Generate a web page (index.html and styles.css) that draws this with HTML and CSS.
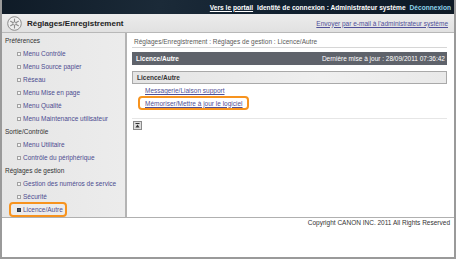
FILE: index.html
```html
<!DOCTYPE html>
<html lang="fr">
<head>
<meta charset="utf-8">
<title>Réglages/Enregistrement</title>
<link rel="stylesheet" href="styles.css">
</head>
<body>
<div class="page">
  <div class="topbar">
    <a class="portal" href="#">Vers le portail</a>
    <span class="ident">Identité de connexion : Administrateur système</span>
    <a class="logout" href="#">Déconnexion</a>
  </div>
  <div class="header">
    <div class="brand">
      <svg class="logo" width="15" height="15" viewBox="0 0 15 15">
        <circle cx="7.5" cy="7.5" r="6.8" fill="#eeeeee" stroke="#8c8c8c" stroke-width="1"/>
        <g stroke="#8c8c8c" stroke-width="1.1" stroke-linecap="round">
          <line x1="7.5" y1="3" x2="7.5" y2="12"/>
          <line x1="3.6" y1="5.25" x2="11.4" y2="9.75"/>
          <line x1="3.6" y1="9.75" x2="11.4" y2="5.25"/>
        </g>
        <circle cx="7.5" cy="7.5" r="1.6" fill="#eeeeee" stroke="#8c8c8c" stroke-width="0.8"/>
      </svg>
      <span class="title">Réglages/Enregistrement</span>
    </div>
    <a class="mail" href="#">Envoyer par e-mail à l'administrateur système</a>
  </div>
  <div class="body">
    <nav class="side">
      <div class="grp">Préférences</div>
      <ul class="items">
        <li><span class="bul"></span><a href="#">Menu Contrôle</a></li>
        <li><span class="bul"></span><a href="#">Menu Source papier</a></li>
        <li><span class="bul"></span><a href="#">Réseau</a></li>
        <li><span class="bul"></span><a href="#">Menu Mise en page</a></li>
        <li><span class="bul"></span><a href="#">Menu Qualité</a></li>
        <li><span class="bul"></span><a href="#">Menu Maintenance utilisateur</a></li>
      </ul>
      <div class="grp">Sortie/Contrôle</div>
      <ul class="items">
        <li><span class="bul"></span><a href="#">Menu Utilitaire</a></li>
        <li><span class="bul"></span><a href="#">Contrôle du périphérique</a></li>
      </ul>
      <div class="grp">Réglages de gestion</div>
      <ul class="items">
        <li><span class="bul"></span><a href="#">Gestion des numéros de service</a></li>
        <li><span class="bul"></span><a href="#">Sécurité</a></li>
        <li class="current"><span class="hl-side"><span class="bul on"></span><a href="#">Licence/Autre</a></span></li>
      </ul>
    </nav>
    <main class="main">
      <div class="crumb">Réglages/Enregistrement : Réglages de gestion : Licence/Autre</div>
      <div class="titlebar">
        <span class="tb-name">Licence/Autre</span>
        <span class="tb-date">Dernière mise à jour : 28/09/2011 07:36:42</span>
      </div>
      <div class="section">Licence/Autre</div>
      <ul class="links">
        <li><a href="#">Messagerie/Liaison support</a></li>
        <li><span class="hl-main"><a href="#">Mémoriser/Mettre à jour le logiciel</a></span></li>
      </ul>
      <div class="sep"></div>
      <a class="totop" href="#" aria-label="Haut de page">
        <svg width="9" height="9" viewBox="0 0 9 9">
          <rect x="0.5" y="0.5" width="8" height="8" fill="#dedede" stroke="#8a8a8a"/>
          <rect x="2.5" y="2" width="4" height="1" fill="#333"/>
          <path d="M4.5 3.4 L6.6 6.4 L2.4 6.4 Z" fill="#333"/>
        </svg>
      </a>
    </main>
  </div>
  <div class="footer">Copyright CANON INC. 2011 All Rights Reserved</div>
</div>
</body>
</html>
```

FILE: styles.css
```css
html, body {
  margin: 0;
  padding: 0;
  background: #ffffff;
}

body {
  font-family: "Liberation Sans", Arial, sans-serif;
  font-size: 6.5px;
  color: #333333;
}

a {
  color: #4a4a94;
  text-decoration: underline;
}

ul {
  list-style: none;
  margin: 0;
  padding: 0;
}

.page {
  width: 456px;
  height: 259px;
  box-sizing: border-box;
  border: 2px solid #9a9a9a;
  border-top: 0;
  display: flex;
  flex-direction: column;
  background: #ffffff;
  overflow: hidden;
}

/* top dark bar */
.topbar {
  height: 14px;
  flex: none;
  background: linear-gradient(100deg, #0f1b27 0%, #1b2a38 35%, #122130 60%, #0e1a26 100%);
  display: flex;
  align-items: center;
  justify-content: flex-end;
  gap: 4px;
  padding-right: 3px;
  font-size: 6.6px;
  font-weight: bold;
  color: #ffffff;
  white-space: nowrap;
}

.topbar .portal {
  color: #ffffff;
}

.topbar .logout {
  color: #8ed5ec;
  text-decoration: none;
}

/* header */
.header {
  height: 18px;
  flex: none;
  background: linear-gradient(#ececec, #e1e1e1);
  border-bottom: 1px solid #b8b8b8;
  display: flex;
  align-items: center;
  justify-content: space-between;
  padding: 0 6px 0 5px;
}

.brand {
  display: flex;
  align-items: center;
  gap: 5px;
}

.logo {
  display: block;
}

.title {
  font-size: 8px;
  font-weight: bold;
  color: #222222;
}

.mail {
  font-size: 6.5px;
  color: #50509a;
}

/* body */
.body {
  flex: 1;
  display: flex;
  min-height: 0;
}

.side {
  width: 125px;
  flex: none;
  box-sizing: border-box;
  background: linear-gradient(90deg, #e6e6e6, #ececec);
  border-right: 2px solid #b4b4b4;
  padding-top: 1px;
}

.grp {
  height: 13px;
  line-height: 13px;
  padding-left: 3px;
  color: #333333;
  white-space: nowrap;
}

.items li {
  height: 13px;
  display: flex;
  align-items: center;
  padding-left: 15px;
  white-space: nowrap;
}

.items a {
  color: #4c4c90;
  text-decoration: none;
}

.bul {
  width: 4px;
  height: 4px;
  box-sizing: border-box;
  border: 1px solid #a2a2a2;
  background: #f4f4f4;
  margin-right: 2px;
  flex: none;
}

.bul.on {
  border-color: #2a3646;
  background: #b8c0cc;
  box-shadow: inset 0 0 0 0.6px #2a3646;
}

.items li.current {
  padding-left: 7px;
}

.hl-side {
  display: inline-flex;
  align-items: center;
  height: 15px;
  box-sizing: border-box;
  margin: -1px 0;
  padding: 0 2px 0 6px;
  border: 2px solid #f7931e;
  border-radius: 4px;
  background: #ececec;
}

/* main */
.main {
  flex: 1;
  min-width: 0;
  padding: 4px 7px 0 5px;
  background: #ffffff;
}

.crumb {
  height: 10px;
  line-height: 10px;
  padding-left: 2px;
  color: #5a5a5a;
  border-bottom: 1px solid #d6d6d6;
  white-space: nowrap;
}

.titlebar {
  margin-top: 4px;
  height: 13px;
  background: #5f636b;
  color: #ffffff;
  display: flex;
  align-items: center;
  justify-content: space-between;
  padding: 0 2px 0 4px;
  white-space: nowrap;
}

.tb-name {
  font-weight: bold;
}

.section {
  margin-top: 6px;
  height: 13px;
  box-sizing: border-box;
  border: 1px solid #a9a9a9;
  background: linear-gradient(90deg, #e4e4e4, #efefef 60%, #e9e9e9);
  line-height: 11px;
  padding-left: 4px;
  font-weight: bold;
  color: #333333;
}

.links {
  padding-left: 13px;
}

.links li {
  height: 13px;
  display: flex;
  align-items: center;
  white-space: nowrap;
}

.links a {
  color: #4f4f96;
}

.hl-main {
  display: inline-flex;
  align-items: center;
  height: 14px;
  box-sizing: border-box;
  margin: -1px 0 0 -7px;
  padding: 0 4px 0 5px;
  border: 2px solid #f7931e;
  border-radius: 4px;
}

.sep {
  margin-top: 8px;
  height: 1px;
  background: #e6e6e6;
}

.totop {
  display: block;
  width: 9px;
  height: 9px;
  margin: 2px 0 0 1px;
}

.totop svg {
  display: block;
}

/* footer */
.footer {
  height: 40px;
  flex: none;
  box-sizing: border-box;
  border-top: 1px solid #b0b0b0;
  padding: 1px 4px 0 0;
  line-height: 8px;
  text-align: right;
  color: #333333;
  white-space: nowrap;
}
```
